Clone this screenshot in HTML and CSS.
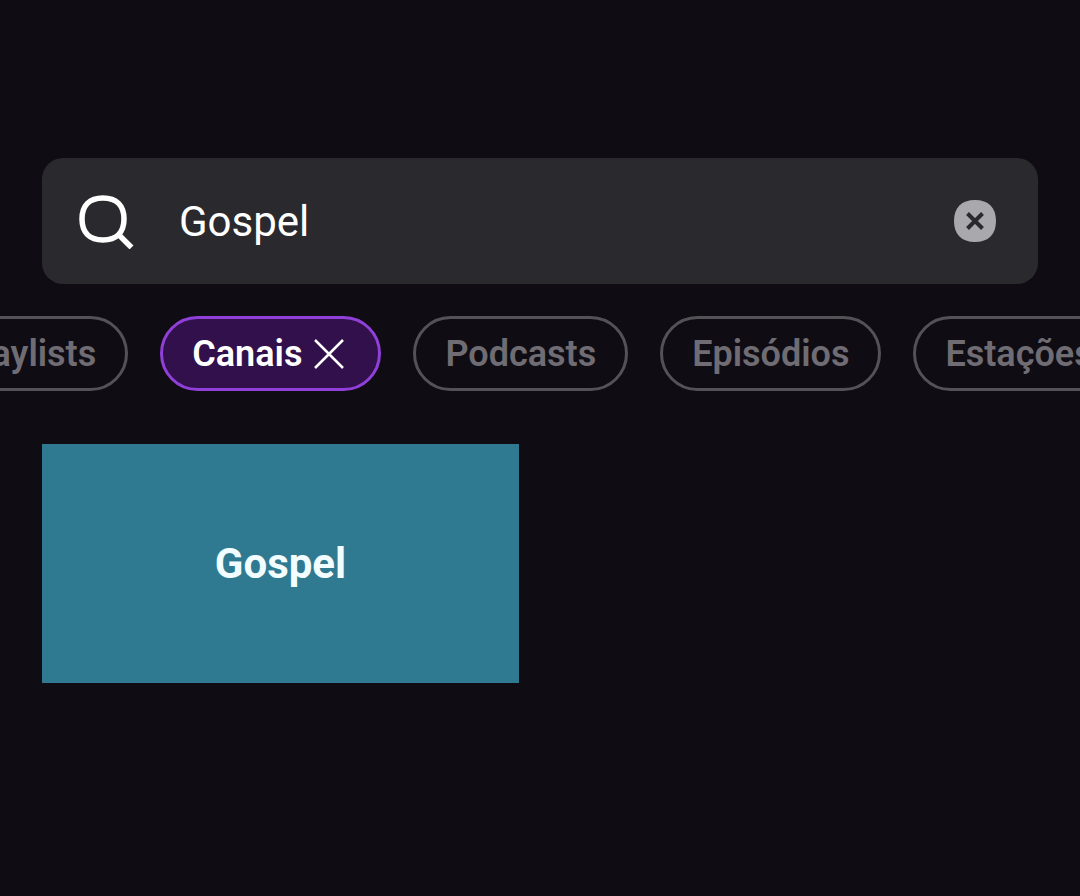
FILE: index.html
```html
<!DOCTYPE html>
<html lang="pt-BR">
<head>
    <meta charset="UTF-8">
    <meta name="viewport" content="width=device-width, initial-scale=1.0">
    <title>Buscar</title>
    <link rel="stylesheet" href="styles.css">
</head>
<body>
    <header>
        <form class="search-box" role="search">
            <svg class="search-icon" viewBox="0 0 56 56" aria-hidden="true">
                <path d="M25 5C38.500 5 46 12.500 46 26S38.500 47 25 47S4 39.500 4 26S11.500 5 25 5Z"/>
                <path d="M39 40L53.500 54.500"/>
            </svg>
            <input type="text" class="search-input" value="Gospel" aria-label="Buscar">
            <button type="reset" class="clear-button" aria-label="Limpar busca">
                <svg viewBox="0 0 42 42" aria-hidden="true">
                    <path class="clear-shape" d="M21 0C34.500 0 42 7.500 42 21S34.500 42 21 42S0 34.500 0 21S7.500 0 21 0Z"/>
                    <path class="clear-cross" d="M13.500 13.500L28.500 28.500M28.500 13.500L13.500 28.500"/>
                </svg>
            </button>
        </form>
    </header>

    <nav class="filters" aria-label="Filtros">
        <div class="filter-list">
            <button type="button" class="chip">Playlists</button>
            <button type="button" class="chip active">
                Canais
                <svg class="chip-close" viewBox="0 0 30 30" aria-hidden="true">
                    <path d="M1 1L29 29M29 1L1 29"/>
                </svg>
            </button>
            <button type="button" class="chip">Podcasts</button>
            <button type="button" class="chip">Episódios</button>
            <button type="button" class="chip">Estações</button>
        </div>
    </nav>

    <main class="results">
        <a href="#gospel" class="channel">Gospel</a>
    </main>
</body>
</html>
```

FILE: styles.css
```css
* {
    box-sizing: border-box;
}

body {
    font-family: Roboto, "Liberation Sans", sans-serif;
    background-color: #0f0c13;
    color: #fff;
    margin: 0;
    min-height: 100vh;
}

header {
    padding: 158px 42px 32px; /* Room for the status bar */
}

.search-box {
    display: flex;
    align-items: center;
    height: 126px;
    padding: 0 42px 0 36px;
    border-radius: 21px;
    background-color: #2a292e;
}

.search-icon {
    flex: none;
    width: 56px;
    height: 56px;
    margin-right: 45px;
    fill: none;
    stroke: #fff;
    stroke-width: 5.5;
}

.search-input {
    flex: 1;
    min-width: 0;
    padding: 0;
    border: none;
    outline: none;
    background: none;
    color: #fff;
    font-family: inherit;
    font-size: 42px;
}

.clear-button {
    flex: none;
    width: 42px;
    height: 42px;
    padding: 0;
    border: none;
    background: none;
    cursor: pointer;
}

.clear-button svg {
    display: block;
}

.clear-shape {
    fill: #a9a8ad;
}

.clear-cross {
    fill: none;
    stroke: #2a292e;
    stroke-width: 4;
}

.filters {
    overflow: hidden;
}

.filter-list {
    display: flex;
    gap: 32px;
    margin-left: -73px;
}

.chip {
    flex: none;
    display: flex;
    align-items: center;
    gap: 12px;
    height: 75px;
    padding: 0 29px;
    border: 3px solid #545157;
    border-radius: 38px;
    background: none;
    color: #6f6c73;
    font-family: inherit;
    font-size: 36px;
    font-weight: 600;
    cursor: pointer;
}

.chip.active {
    padding-right: 34px;
    border-color: #9040d8;
    background-color: #32104b;
    color: #fff;
}

.chip-close {
    width: 30px;
    height: 30px;
    fill: none;
    stroke: #fff;
    stroke-width: 2.5;
}

.results {
    display: grid;
    grid-template-columns: repeat(2, 1fr);
    gap: 42px;
    padding: 53px 42px;
}

.channel {
    display: flex;
    align-items: center;
    justify-content: center;
    aspect-ratio: 2 / 1;
    background-color: #307a91;
    color: #f2fdff;
    font-size: 42px;
    font-weight: 700;
    text-decoration: none;
}
```
